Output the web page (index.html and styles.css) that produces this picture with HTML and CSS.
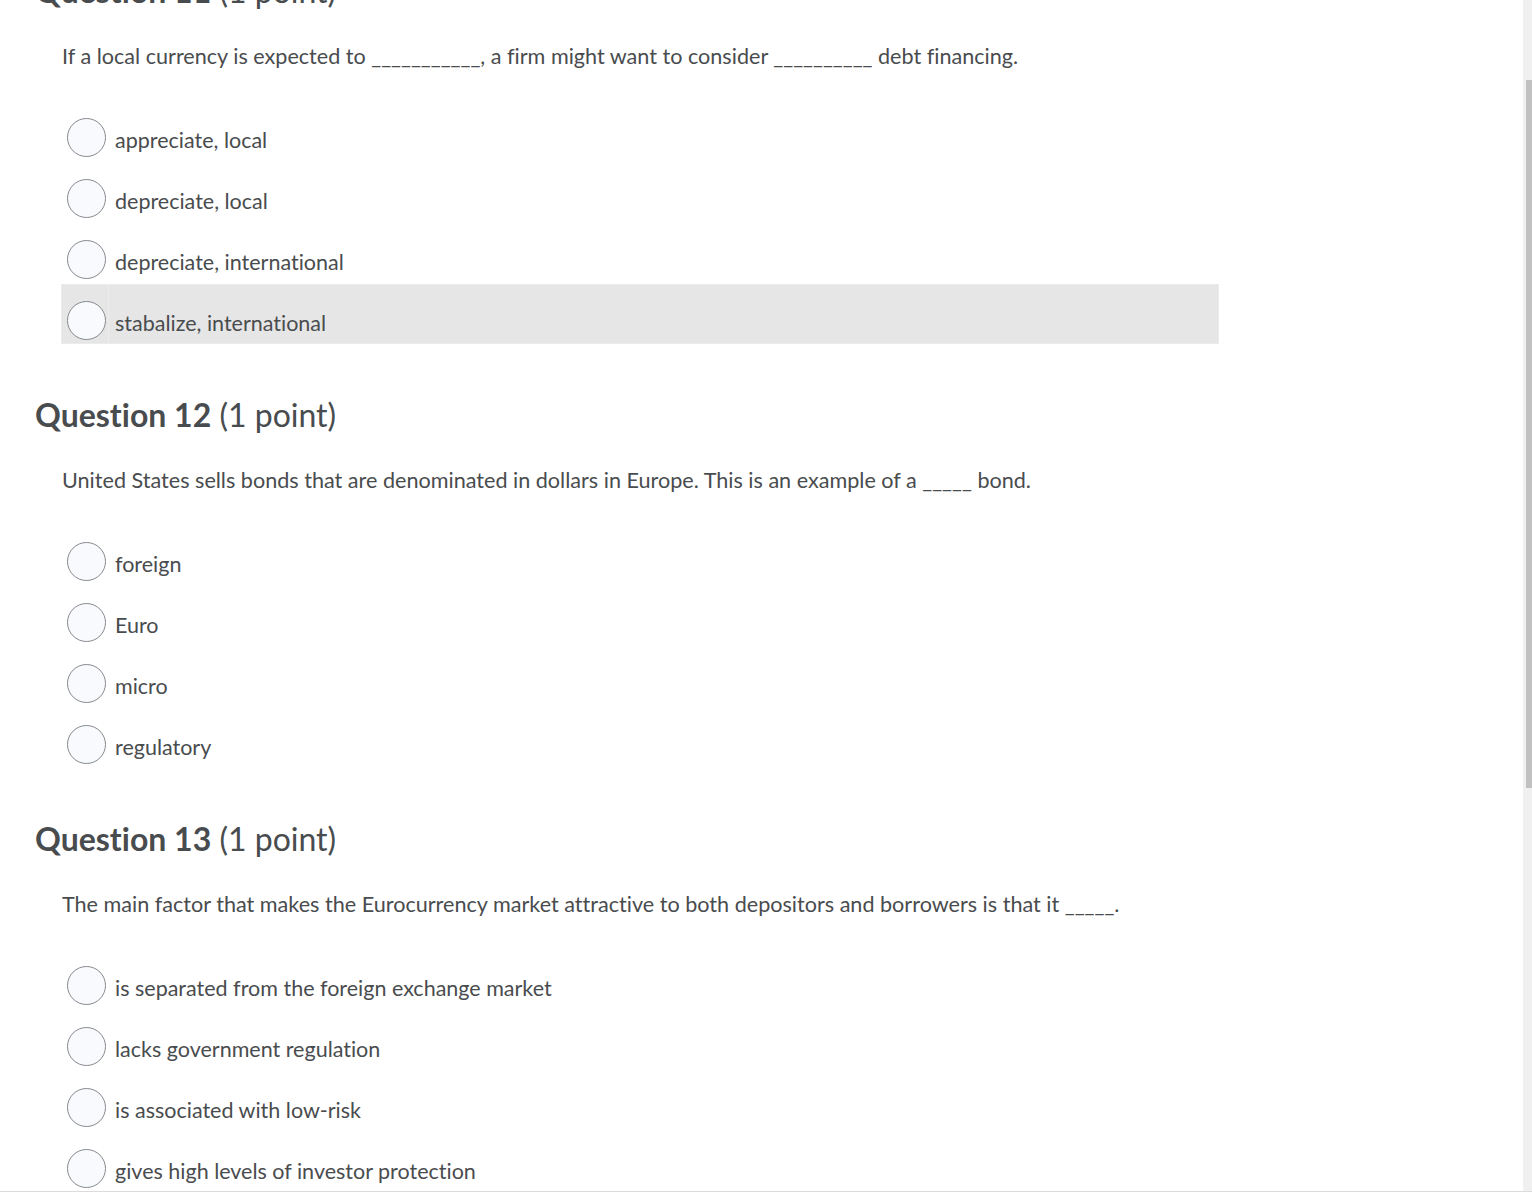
FILE: index.html
```html
<!DOCTYPE html>
<html lang="en">
<head>
    <meta charset="UTF-8">
    <title>Quiz</title>
    <link rel="stylesheet" href="styles.css">
</head>
<body>
    <div class="frame">
        <div class="page">
            <div class="quiz">
                <div class="question first">
                    <h2><strong>Question 11</strong> (1 point)</h2>
                    <p class="question-text">If a local currency is expected to ___________, a firm might want to consider __________ debt financing.</p>
                    <div class="options">
                        <div class="option"><div class="option-radio"><span class="radio"></span></div><div class="option-label">appreciate, local</div></div>
                        <div class="option"><div class="option-radio"><span class="radio"></span></div><div class="option-label">depreciate, local</div></div>
                        <div class="option"><div class="option-radio"><span class="radio"></span></div><div class="option-label">depreciate, international</div></div>
                        <div class="option hover"><div class="option-radio"><span class="radio"></span></div><div class="option-label">stabalize, international</div></div>
                    </div>
                </div>

                <div class="question">
                    <h2><strong>Question 12</strong> (1 point)</h2>
                    <p class="question-text">United States sells bonds that are denominated in dollars in Europe. This is an example of a _____ bond.</p>
                    <div class="options">
                        <div class="option"><div class="option-radio"><span class="radio"></span></div><div class="option-label">foreign</div></div>
                        <div class="option"><div class="option-radio"><span class="radio"></span></div><div class="option-label">Euro</div></div>
                        <div class="option"><div class="option-radio"><span class="radio"></span></div><div class="option-label">micro</div></div>
                        <div class="option"><div class="option-radio"><span class="radio"></span></div><div class="option-label">regulatory</div></div>
                    </div>
                </div>

                <div class="question">
                    <h2><strong>Question 13</strong> (1 point)</h2>
                    <p class="question-text">The main factor that makes the Eurocurrency market attractive to both depositors and borrowers is that it _____.</p>
                    <div class="options">
                        <div class="option"><div class="option-radio"><span class="radio"></span></div><div class="option-label">is separated from the foreign exchange market</div></div>
                        <div class="option"><div class="option-radio"><span class="radio"></span></div><div class="option-label">lacks government regulation</div></div>
                        <div class="option"><div class="option-radio"><span class="radio"></span></div><div class="option-label">is associated with low-risk</div></div>
                        <div class="option"><div class="option-radio"><span class="radio"></span></div><div class="option-label">gives high levels of investor protection</div></div>
                    </div>
                </div>
            </div>
        </div>
        <div class="scrollbar"><div class="thumb"></div></div>
    </div>
</body>
</html>
```

FILE: styles.css
```css
body {
    margin: 0;
    background: #fff;
    font-family: Lato, "Open Sans", sans-serif;
    font-variant-ligatures: no-common-ligatures;
    color: #494c4e;
}
.frame {
    display: flex;
    height: 1191px;
    overflow: hidden;
    border-bottom: 1px solid #dcdcdc;
}
.page {
    flex: 1;
    overflow: hidden;
}
.quiz {
    padding-left: 35px;
    width: 1184px;
}
.question {
    margin-bottom: 51px;
}
.question.first {
    margin-top: -29px;
}
.question h2 {
    margin: 0 0 30px;
    font-size: 32px;
    line-height: 40px;
    font-weight: 400;
}
.question h2 strong {
    font-weight: 700;
}
.question-text {
    margin: 0 0 30px 27px;
    font-size: 21.6px;
    line-height: 30px;
}
.options {
    margin-left: 26px;
}
.option {
    display: flex;
    height: 60px;
    margin-bottom: 1px;
    box-sizing: border-box;
    border: 1px solid transparent;
    font-size: 21.5px;
    line-height: 30px;
}
.option.hover {
    background: #e6e6e6;
    border-color: #ececec;
}
.option-radio {
    width: 47px;
    box-sizing: border-box;
    padding: 16px 0 0 5px;
    border-right: 1px solid transparent;
}
.option.hover .option-radio {
    border-right-color: #ececec;
}
.radio {
    display: block;
    width: 39px;
    height: 39px;
    box-sizing: border-box;
    border: 1px solid #868a8d;
    border-radius: 50%;
    background: #f9fafe;
}
.option-label {
    padding: 23px 0 0 6px;
}
.scrollbar {
    width: 9px;
    background: #f0f0f0;
    display: flex;
    justify-content: flex-end;
}
.thumb {
    width: 6px;
    height: 708px;
    margin-top: 80px;
    background: #c1c1c1;
}
```
